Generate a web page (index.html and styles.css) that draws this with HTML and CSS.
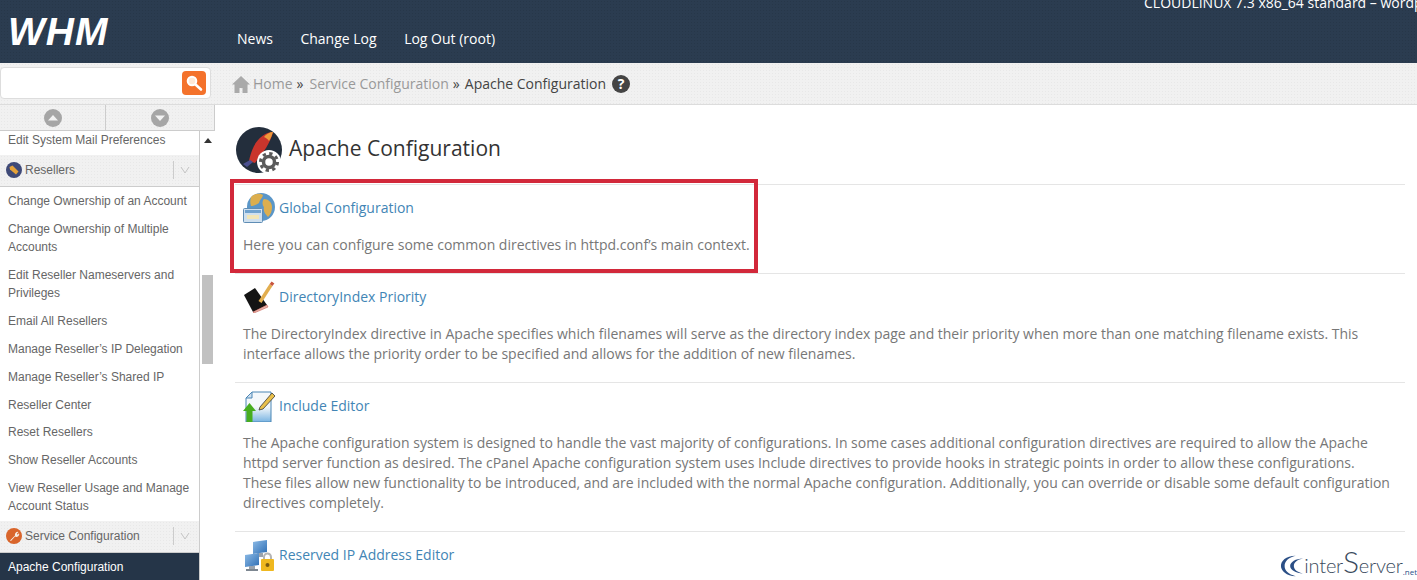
FILE: index.html
```html
<!DOCTYPE html>
<html lang="en">
<head>
<meta charset="utf-8">
<title>Apache Configuration</title>
<link rel="stylesheet" href="styles.css">
</head>
<body>
<div class="app">
  <header class="topbar">
    <div class="brand">WHM</div>
    <nav class="topnav"><a>News</a><a>Change Log</a><a>Log Out (root)</a></nav>
    <div class="hostinfo">CLOUDLINUX 7.3 x86_64 standard – wordpress</div>
  </header>
  <div class="toolbar">
    <div class="searchwrap">
      <div class="searchbox">
        <span class="searchbtn">
          <svg width="18" height="18" viewBox="0 0 18 18"><circle cx="7" cy="7" r="4.3" fill="#ffe9d6" stroke="#fff" stroke-width="2"/><path d="M10.5 10.5L16 15.5" stroke="#fff" stroke-width="2.6" stroke-linecap="round"/></svg>
        </span>
      </div>
    </div>
    <div class="crumbs">
      <svg class="homeicon" width="18" height="17" viewBox="0 0 18 17"><path d="M9 0L0 8.5h2.5V17h5v-5h3v5h5V8.5H18z" fill="#aaa"/></svg>
      <span class="crumb-link home">Home</span><span class="sep">»</span>
      <span class="crumb-link">Service Configuration</span><span class="sep">»</span>
      <span class="crumb-current">Apache Configuration</span>
      <span class="help">?</span>
    </div>
  </div>
  <div class="content">
    <aside class="sidebar">
      <div class="pager">
        <div class="pagebtn up"><svg width="18" height="18" viewBox="0 0 18 18"><circle cx="9" cy="9" r="9" fill="#a6a6a6"/><path d="M4 11.5L9 6l5 5.500z" fill="#f2f2f2"/></svg></div>
        <div class="pagebtn"><svg width="18" height="18" viewBox="0 0 18 18"><circle cx="9" cy="9" r="9" fill="#a6a6a6"/><path d="M4 6.500L9 12l5-5.500z" fill="#f2f2f2"/></svg></div>
      </div>
      <div class="sidescroll">
        <div class="sidelist">
          <a class="item first">Edit System Mail Preferences</a>
          <div class="group">
            <svg width="16" height="16" viewBox="0 0 16 16"><circle cx="8" cy="8" r="8" fill="#3f4a78"/><path d="M3.500 5l3-1.500 6 6-2.500 3-6-5z" fill="#e6a33a"/></svg>
            <span class="grouptitle">Resellers</span><span class="chev"><svg width="10" height="8" viewBox="0 0 10 8"><path d="M1 1l4 6 4-6" fill="none" stroke="#c4c4c4"/></svg></span>
          </div>
          <a class="item">Change Ownership of an Account</a>
          <a class="item">Change Ownership of Multiple Accounts</a>
          <a class="item">Edit Reseller Nameservers and Privileges</a>
          <a class="item">Email All Resellers</a>
          <a class="item">Manage Reseller’s IP Delegation</a>
          <a class="item">Manage Reseller’s Shared IP</a>
          <a class="item">Reseller Center</a>
          <a class="item tight">Reset Resellers</a>
          <a class="item">Show Reseller Accounts</a>
          <a class="item">View Reseller Usage and Manage Account Status</a>
          <div class="group spaced">
            <svg width="16" height="16" viewBox="0 0 16 16"><circle cx="8" cy="8" r="8" fill="#d9652b"/><path d="M4 12.500L9 7.500a2.800 2.800 0 0 1 3.500-3.500L10.800 5.700l1 1L13 5a2.800 2.800 0 0 1-4 3.500L5 13z" fill="#f6efe6"/></svg>
            <span class="grouptitle">Service Configuration</span><span class="chev"><svg width="10" height="8" viewBox="0 0 10 8"><path d="M1 1l4 6 4-6" fill="none" stroke="#c4c4c4"/></svg></span>
          </div>
          <a class="item active">Apache Configuration</a>
        </div>
        <div class="scrolltrack">
          <span class="scrollup"></span>
          <span class="scrollthumb"></span>
        </div>
      </div>
    </aside>
    <main class="main">
      <div class="pagehead">
        <svg class="pageicon" width="47" height="47" viewBox="0 0 47 47">
          <circle cx="23" cy="23" r="23" fill="#232e3c"/>
          <path d="M37 5c-7 0-15 6-19 14-3 6-4 10-5 15l6 2c4-6 8-10 11-15 3-5 6-11 7-16z" fill="#c9352c"/>
          <path d="M37 5c-3 0-7 2-9 5 2 1 4 2 5 4 2-3 3-6 4-9z" fill="#ef9a3a"/>
          <path d="M7 37l7-4 3 2-6 5z" fill="#4a4f8f"/>
          <circle cx="33" cy="35" r="12" fill="#fff"/>
          <circle cx="33" cy="35" r="5.500" fill="none" stroke="#5a5a5a" stroke-width="3.500"/>
          <circle cx="33" cy="35" r="8.500" fill="none" stroke="#5a5a5a" stroke-width="3" stroke-dasharray="3.300 3.370"/>
        </svg>
        <h1 class="pagetitle">Apache Configuration</h1>
      </div>
      <section class="entry">
        <div class="entryhead">
          <svg width="32" height="32" viewBox="0 0 32 32">
            <circle cx="18" cy="15" r="14" fill="#5a96c8"/>
            <path d="M8 5c4-4 9-4 12-2-1 4-3 4-4 8-3 2-6 3-8 3-1-3-1-6 0-9zM21 7c4 0 8 3 8 8 0 4-1 7-4 10-3-3-5-6-4-10-2-2-2-6 0-8z" fill="#dcae4e"/>
            <rect x="0.500" y="16.500" width="19" height="14" rx="1" fill="#cfe0ef" stroke="#5f8db5"/>
            <rect x="2" y="18" width="16" height="3" fill="#6fa2cf"/>
            <rect x="4" y="23" width="12" height="4" fill="#f1e6b8"/>
          </svg>
          <a class="entrylink">Global Configuration</a>
        </div>
        <p class="entrytext">Here you can configure some common directives in httpd.conf’s main context.</p>
        <div class="highlight"></div>
      </section>
      <section class="entry">
        <div class="entryhead">
          <svg width="32" height="32" viewBox="0 0 32 32">
            <path d="M1 14L12 7l12 17-14 7z" fill="#141414"/>
            <path d="M10 31l14-7 1 2-14 6z" fill="#e6b9b0" stroke="#c0443a" stroke-width="0.500"/>
            <path d="M17 21L28 4" stroke="#e2ae4f" stroke-width="3.500"/>
            <path d="M28 4l2-2.500" stroke="#c8553d" stroke-width="3.500"/>
          </svg>
          <a class="entrylink">DirectoryIndex Priority</a>
        </div>
        <p class="entrytext">The DirectoryIndex directive in Apache specifies which filenames will serve as the directory index page and their priority when more than one matching filename exists. This interface allows the priority order to be specified and allows for the addition of new filenames.</p>
      </section>
      <section class="entry">
        <div class="entryhead">
          <svg width="32" height="32" viewBox="0 0 32 32">
            <defs><linearGradient id="sheet" x1="0" y1="0" x2="0" y2="1"><stop offset="0.500" stop-color="#f4f8fb"/><stop offset="1" stop-color="#79b4e2"/></linearGradient></defs>
            <path d="M9 2h19v30H3V8z" fill="url(#sheet)" stroke="#4b86b5"/>
            <path d="M9 2v6H3z" fill="#cfe0ef" stroke="#4b86b5"/>
            <path d="M17 17L29 3l3 3-12 13-4 1z" fill="#e9c04c" stroke="#3a3a3a" stroke-width="0.800"/>
            <path d="M6.500 13l6.500 8h-3.500v11h-6V21H0z" fill="#47ad1f"/>
          </svg>
          <a class="entrylink">Include Editor</a>
        </div>
        <p class="entrytext">The Apache configuration system is designed to handle the vast majority of configurations. In some cases additional configuration directives are required to allow the Apache httpd server function as desired. The cPanel Apache configuration system uses Include directives to provide hooks in strategic points in order to allow these configurations. These files allow new functionality to be introduced, and are included with the normal Apache configuration. Additionally, you can override or disable some default configuration directives completely.</p>
      </section>
      <section class="entry">
        <div class="entryhead">
          <svg width="32" height="32" viewBox="0 0 32 32">
            <defs><linearGradient id="screen" x1="0" y1="0" x2="1" y2="1"><stop offset="0" stop-color="#8dbbe6"/><stop offset="1" stop-color="#2f6fb5"/></linearGradient></defs>
            <path d="M10 3l14-2v12l-14 2z" fill="url(#screen)"/>
            <rect x="14" y="14" width="6" height="4" fill="#9aa3ad"/>
            <path d="M2 16l14-2v12L2 28z" fill="url(#screen)"/>
            <rect x="6" y="27" width="6" height="3" fill="#9aa3ad"/>
            <rect x="3" y="30" width="12" height="2" fill="#7d8791"/>
            <path d="M21 21v-3a3.500 3.500 0 0 1 7 0v3" fill="none" stroke="#b5b5b5" stroke-width="2"/>
            <rect x="18" y="20" width="13" height="12" rx="1" fill="#efb81f"/>
            <circle cx="24.500" cy="26" r="2" fill="#7a5a10"/>
          </svg>
          <a class="entrylink">Reserved IP Address Editor</a>
        </div>
      </section>
    </main>
  </div>
  <div class="watermark">
    <svg width="24" height="24" viewBox="0 0 26 26"><path d="M17 2C6 2 1 8 1 13s6 11 16 11C9 22 5 18 5 13S9 4 17 2z" fill="#2b4f86"/><path d="M25 5c-8 0-14 4-14 8s6 8 14 8c-6-1-10-4-10-8s4-7 10-8z" fill="#2b4f86"/></svg>
    <span class="wm-text">inter<span class="wm-s">S</span>erver</span><span class="wm-net">.net</span>
  </div>
</div>
</body>
</html>
```

FILE: styles.css
```css
* { box-sizing: border-box; }
html, body { margin: 0; height: 100%; overflow: hidden; background: #fff; }
body { font-family: "Open Sans", sans-serif; font-size: 14px; color: #777; }
.app { position: relative; height: 580px; display: flex; flex-direction: column; overflow: hidden; }

.topbar {
  height: 63px; flex: none; display: flex; align-items: flex-start; overflow: hidden; color: #fff;
  background-color: #2b3c50;
  background-image: radial-gradient(rgba(0,0,0,.09) 1px, transparent 1px);
  background-size: 3px 3px;
}
.brand {
  width: 237px; flex: none; padding-left: 8px; margin-top: 9px;
  font: italic bold 39px/45px "Liberation Sans", sans-serif; letter-spacing: 1px;
}
.topnav { display: flex; gap: 27.5px; margin-top: 29px; line-height: 20px; }
.hostinfo { margin: -7px 0 0 auto; width: 273px; white-space: nowrap; overflow: hidden; line-height: 20px; font-size: 14px; }

.toolbar { height: 42px; flex: none; display: flex; background-color: #f1f1f1;
  background-image: radial-gradient(rgba(0,0,0,.035) 1px, transparent 1px); background-size: 3px 3px;
  border-bottom: 1px solid #dcdcdc; }
.searchwrap { width: 215px; flex: none; padding-top: 4px; }
.searchbox { width: 211px; height: 32px; background: #fff; border: 1px solid #ddd; border-radius: 4px; display: flex; justify-content: flex-end; align-items: center; padding-right: 4px; }
.searchbtn { width: 24px; height: 24px; border-radius: 4px; background: #f4722b; display: flex; align-items: center; justify-content: center; }
.crumbs { flex: 1; display: flex; align-items: center; padding-left: 17px; line-height: 20px; padding-top: 1px; }
.homeicon { margin-right: 3px; flex: none; }
.crumb-link { color: #999; }
.sep { color: #444; margin: 0 6px 0 4px; }
.crumb-current { color: #444; margin-left: -1px; }
.help { width: 18px; height: 18px; margin-left: 6px; border-radius: 50%; background: #444; color: #fff; font-weight: 700; font-size: 14px; line-height: 18px; text-align: center; }

.content { flex: 1; display: flex; min-height: 0; }
.sidebar { width: 215px; flex: none; display: flex; flex-direction: column; min-height: 0; font: 12px/18px "Liberation Sans", sans-serif; }
.pager { height: 26px; flex: none; display: flex; background-color: #f1f1f1;
  background-image: radial-gradient(rgba(0,0,0,.035) 1px, transparent 1px); background-size: 3px 3px;
  border-bottom: 1px solid #ccc; border-right: 1px solid #ccc; }
.pagebtn { flex: 1; display: flex; align-items: center; justify-content: center; }
.pagebtn.up { flex: none; width: 105px; }
.pagebtn + .pagebtn { border-left: 1px solid #ccc; }
.sidescroll { flex: 1; display: flex; min-height: 0; }
.sidelist { width: 200px; flex: none; border-right: 1px solid #ccc; overflow: hidden; }
.item { display: block; padding: 5px 8px; color: #666; }
.item.first { padding: 0 8px 6px; }
.item.tight { margin-top: -1px; }
.item.active { background: #253548; color: #fff; }
.group { height: 32px; display: flex; align-items: center; padding: 0 0 2px 6px; color: #666; border-bottom: 1px solid #ccc; background-color: #f1f1f1;
  background-image: radial-gradient(rgba(0,0,0,.035) 1px, transparent 1px); background-size: 3px 3px; }
.group.spaced { margin-top: 1px; }
.grouptitle { flex: 1; margin-left: 3px; }
.chev { width: 26px; height: 18px; border-left: 1px solid #ccc; display: flex; align-items: center; justify-content: center; padding-right: 4px; }
.scrolltrack { width: 15px; flex: none; display: flex; flex-direction: column; align-items: center; }
.scrollup { margin-top: 7px; width: 0; height: 0; border: 4px solid transparent; border-top: 0; border-bottom: 5px solid #333; }
.scrollthumb { margin-top: 132px; width: 11px; height: 89px; background: #c1c1c1; }

.main { flex: 1; min-width: 0; padding: 22px 12px 0 20px; }
.pagehead { display: flex; align-items: center; gap: 6px; height: 57px; padding: 0 0 11px 1px; }
.pageicon { flex: none; }
.pagetitle { margin: 0 0 4px; font-size: 21px; font-weight: 400; line-height: 40px; color: #333; }
.entry { position: relative; border-top: 1px solid #e5e5e5; padding: 7px 12px 18px 8px; }
.entryhead { display: flex; align-items: center; gap: 4px; height: 32px; }
.entrylink { color: #4285b5; line-height: 20px; }
.entrytext { margin: 11px 0 0; line-height: 20px; letter-spacing: -.015px; }
.highlight { position: absolute; left: -5px; top: -6px; width: 528px; height: 94px; border: 4px solid #d2283a; }

.watermark { position: absolute; right: 0; bottom: 2px; height: 30px; display: flex; align-items: flex-end; color: #3a4a5c; }
.wm-text { font: 300 20px/26px "Lato", sans-serif; letter-spacing: -.2px; white-space: nowrap; }
.wm-s { font-size: 30px; line-height: 24px; }
.wm-net { font: 400 8px/12px "Open Sans", sans-serif; color: #2b4f86; }
```
